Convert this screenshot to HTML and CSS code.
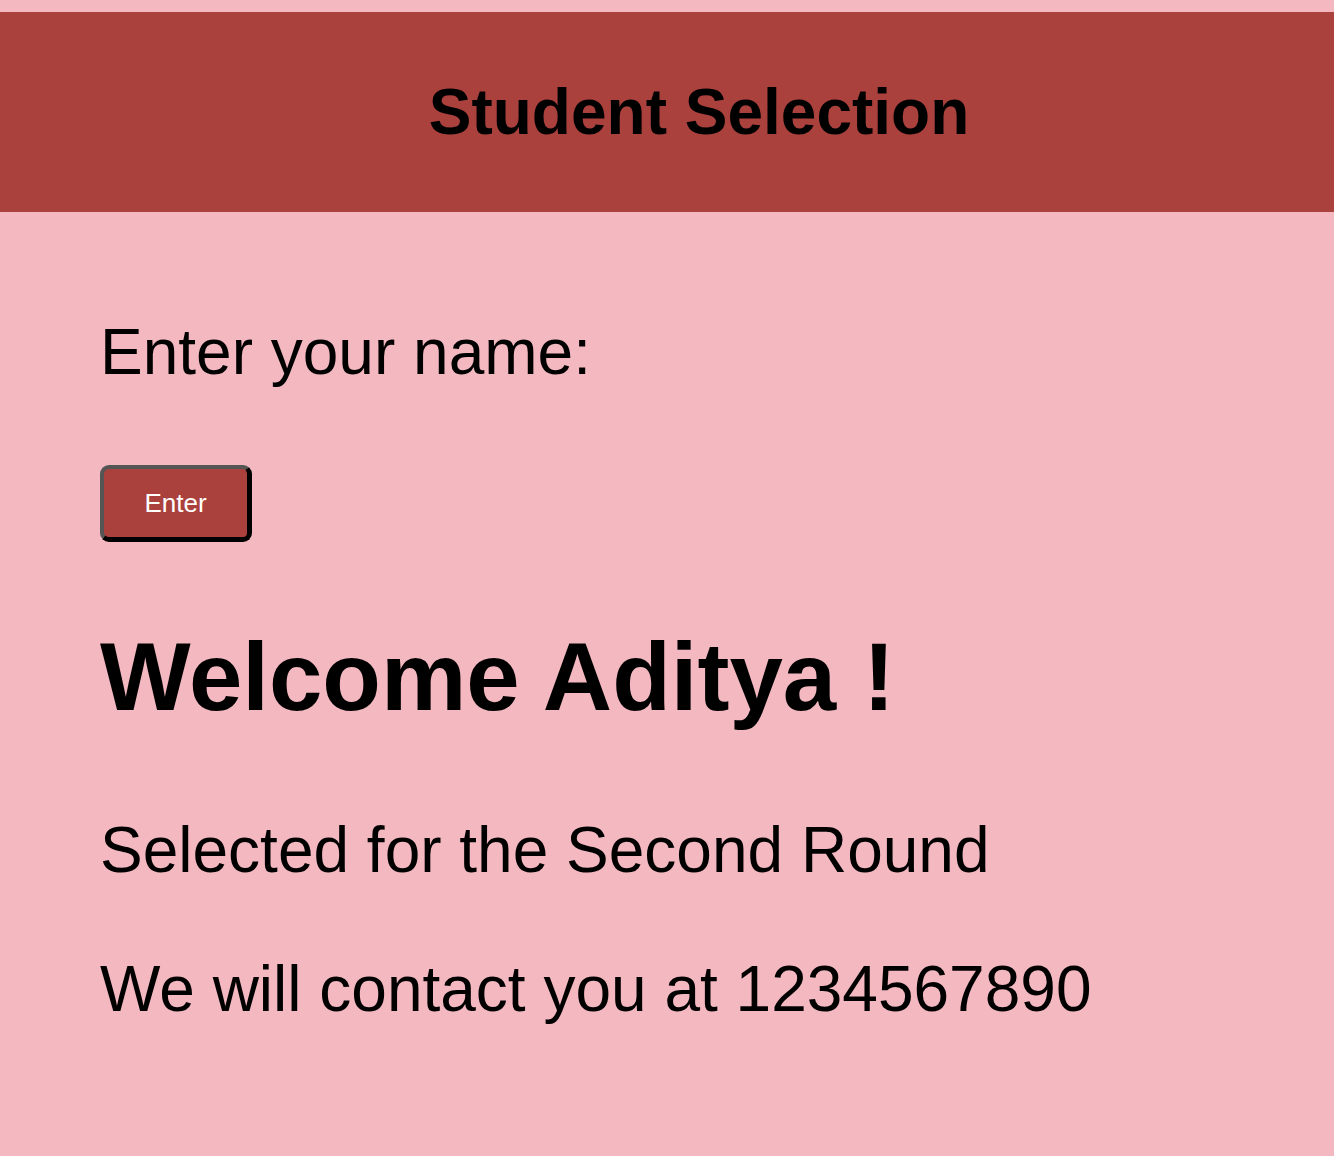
FILE: index.html
```html
<!DOCTYPE html>
<html lang="en">
<head>
<meta charset="utf-8">
<title>Student Selection</title>
<link rel="stylesheet" href="styles.css">
</head>
<body>
<header class="topbar">
  <h1 class="title">Student Selection</h1>
</header>
<main class="content">
  <p class="label">Enter your name:</p>
  <button class="enter-btn" type="button">Enter</button>
  <h2 class="welcome">Welcome Aditya !</h2>
  <p class="line line-selected">Selected for the Second Round</p>
  <p class="line line-contact">We will contact you at 1234567890</p>
</main>
</body>
</html>
```

FILE: styles.css
```css
html, body {
  margin: 0;
  padding: 0;
}

body {
  background: #f4b8c1;
  font-family: "Liberation Sans", Arial, sans-serif;
  color: #000;
  min-height: 1156px;
}

.topbar {
  margin-top: 12px;
  height: 200px;
  background: #ab413d;
  display: flex;
  align-items: center;
  justify-content: center;
  padding-left: 64px;
}

.title {
  margin: 0;
  font-size: 64px;
  line-height: 74px;
  font-weight: bold;
}

.content {
  display: flex;
  flex-direction: column;
  align-items: flex-start;
  padding: 0 100px;
}

.label {
  margin: 103px 0 0;
  font-size: 64px;
  line-height: 74px;
}

.enter-btn {
  margin-top: 76px;
  width: 152px;
  height: 77px;
  box-sizing: border-box;
  background: #ab413d;
  color: #fff;
  font-family: "Liberation Sans", Arial, sans-serif;
  font-size: 26px;
  border-style: solid;
  border-width: 4px 5px 5px 4px;
  border-color: #555 #000 #000 #555;
  border-radius: 9px;
  padding: 0;
}

.welcome {
  margin: 80px 0 0;
  font-size: 96px;
  line-height: 110px;
  font-weight: bold;
}

.line {
  margin: 0;
  font-size: 64px;
  line-height: 74px;
}

.line-selected {
  margin-top: 81px;
}

.line-contact {
  margin-top: 65px;
}
```
